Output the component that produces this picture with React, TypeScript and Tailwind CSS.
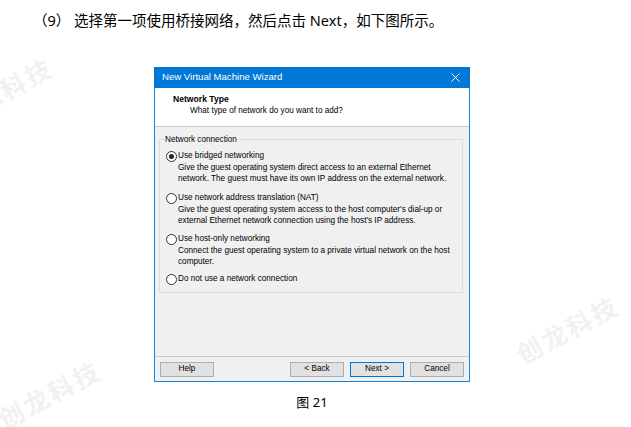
import React from "react";

const ui = { fontFamily: '"Liberation Sans", Arial, sans-serif' };
const cjk = { fontFamily: '"Noto Sans", "Noto Sans CJK SC", sans-serif' };

type Option = { label: string; desc?: string[]; checked?: boolean; gap: string };

const options: Option[] = [
  {
    label: "Use bridged networking",
    desc: [
      "Give the guest operating system direct access to an external Ethernet",
      "network. The guest must have its own IP address on the external network.",
    ],
    checked: true,
    gap: "mt-0",
  },
  {
    label: "Use network address translation (NAT)",
    desc: [
      "Give the guest operating system access to the host computer's dial-up or",
      "external Ethernet network connection using the host's IP address.",
    ],
    gap: "mt-[9px]",
  },
  {
    label: "Use host-only networking",
    desc: ["Connect the guest operating system to a private virtual network on the host", "computer."],
    gap: "mt-[8px]",
  },
  { label: "Do not use a network connection", gap: "mt-[7px]" },
];

function Radio({ checked }: { checked?: boolean }) {
  return (
    <span className="w-[11px] h-[11px] rounded-full border border-[#333] bg-white flex items-center justify-center shrink-0">
      {checked && <span className="w-[5px] h-[5px] rounded-full bg-[#222]" />}
    </span>
  );
}

function Btn({ children, primary }: { children: React.ReactNode; primary?: boolean }) {
  return (
    <div
      className={`w-[54px] h-[15px] flex items-center justify-center bg-[#e1e1e1] border text-[8.2px] text-black ${
        primary ? "border-[#0078d7]" : "border-[#adadad]"
      }`}
    >
      {children}
    </div>
  );
}

function Watermark({ x, y }: { x: number; y: number }) {
  return (
    <div
      className="absolute text-[25px] font-bold text-[#f1f1f1] whitespace-nowrap tracking-[3px] pointer-events-none"
      style={{ left: x, top: y, transform: "translate(-50%, -50%) rotate(-28deg)", ...cjk }}
    >
      创龙科技
    </div>
  );
}

export default function App() {
  return (
    <div className="w-[631px] h-[427px] bg-white relative overflow-hidden">
      <Watermark x={2} y={92} />
      <Watermark x={568} y={330} />
      <Watermark x={50} y={395} />

      <p className="relative pl-[33px] pt-[11px] text-[14.5px] leading-[18px] text-black whitespace-nowrap" style={cjk}>
        （9） 选择第一项使用桥接网络，然后点击 Next，如下图所示。
      </p>

      {/* Wizard window */}
      <div className="relative ml-[154px] mt-[38px] w-[316px] h-[315px] flex flex-col border border-t-0 border-[#1883d7] bg-[#f0f0f0]" style={ui}>
        <div className="h-[21px] -mx-px bg-[#0078d7] flex items-center justify-between pl-[8px] pr-[10px] shrink-0">
          <span className="text-white text-[9.6px]">New Virtual Machine Wizard</span>
          <svg width="9" height="9" viewBox="0 0 9 9">
            <path d="M0.5 0.5 L8.5 8.5 M8.5 0.5 L0.5 8.5" stroke="white" strokeWidth="1" />
          </svg>
        </div>

        <div className="h-[39px] bg-white border-b border-[#c8c8c8] pt-[6px] shrink-0">
          <div className="pl-[18px] text-[8.6px] font-bold leading-[11px] text-black">Network Type</div>
          <div className="pl-[35px] text-[8.2px] leading-[11px] text-black">What type of network do you want to add?</div>
        </div>

        <div className="flex-1 pt-[12px] pl-[4px] pr-[6px]">
          <div className="relative border border-[#dcdcdc] h-[154px] pl-[6px] pt-[11px]">
            <span className="absolute left-[5px] -top-[6px] bg-[#f0f0f0] pr-[2px] text-[8.2px] leading-[11px] text-black">
              Network connection
            </span>
            {options.map((o) => (
              <div key={o.label} className={o.gap}>
                <div className="flex items-center h-[11px] gap-[1px] text-[8.2px] text-black whitespace-nowrap">
                  <Radio checked={o.checked} />
                  <span>{o.label}</span>
                </div>
                {o.desc && (
                  <div className="pl-[12px] text-[8.2px] leading-[11px] text-black whitespace-nowrap">
                    {o.desc.map((d) => (
                      <div key={d}>{d}</div>
                    ))}
                  </div>
                )}
              </div>
            ))}
          </div>
        </div>

        <div className="h-[25px] border-t border-[#c8c8c8] flex items-center pl-[5px] pr-[5px] shrink-0">
          <Btn>Help</Btn>
          <div className="flex-1" />
          <div className="flex gap-[6px]">
            <Btn>&lt; Back</Btn>
            <Btn primary>Next &gt;</Btn>
            <Btn>Cancel</Btn>
          </div>
        </div>
      </div>

      <p className="relative ml-[154px] w-[316px] mt-[12px] text-center text-[13px] leading-[16px] text-black" style={cjk}>
        图 21
      </p>
    </div>
  );
}
